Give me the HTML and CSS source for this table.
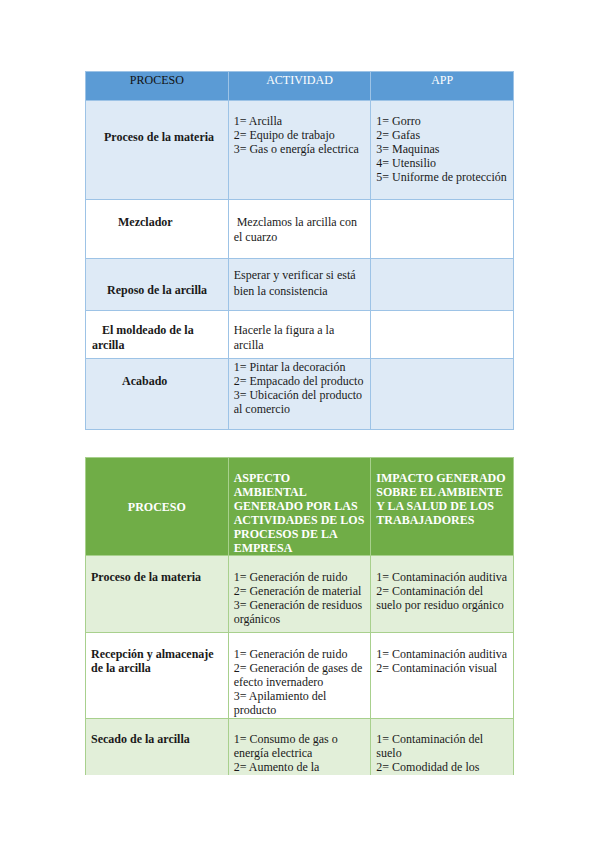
FILE: index.html
```html
<!DOCTYPE html>
<html lang="es">
<head>
<meta charset="utf-8">
<title>Procesos</title>
<link rel="stylesheet" href="styles.css">
</head>
<body>
<main class="page">
  <section class="tbl blue">
    <div class="c h h1">PROCESO</div>
    <div class="c h hw">ACTIVIDAD</div>
    <div class="c h hw">APP</div>

    <div class="c alt b r1a">Proceso de la materia</div>
    <div class="c alt r1b">1= Arcilla<br>2= Equipo de trabajo<br>3= Gas o energía electrica</div>
    <div class="c alt r1b">1= Gorro<br>2= Gafas<br>3= Maquinas<br>4= Utensilio<br>5= Uniforme de protección</div>

    <div class="c b r2a">Mezclador</div>
    <div class="c r2b">&nbsp;Mezclamos la arcilla con el cuarzo</div>
    <div class="c"></div>

    <div class="c alt b r3a">Reposo de la arcilla</div>
    <div class="c alt r3b">Esperar y verificar si está bien la consistencia</div>
    <div class="c alt"></div>

    <div class="c b r4a">El moldeado de la arcilla</div>
    <div class="c r4b">Hacerle la figura a la arcilla</div>
    <div class="c"></div>

    <div class="c alt b r5a">Acabado</div>
    <div class="c alt r5b">1= Pintar la decoración<br>2= Empacado del producto<br>3= Ubicación del producto al comercio</div>
    <div class="c alt"></div>
  </section>

  <section class="tbl green">
    <div class="c gh gh1">PROCESO</div>
    <div class="c gh">ASPECTO<br>AMBIENTAL GENERADO POR LAS ACTIVIDADES DE LOS PROCESOS DE LA EMPRESA</div>
    <div class="c gh">IMPACTO GENERADO SOBRE EL AMBIENTE Y LA SALUD DE LOS TRABAJADORES</div>

    <div class="c galt b g1">Proceso de la materia</div>
    <div class="c galt g1">1= Generación de ruido<br>2= Generación de material<br>3= Generación de residuos orgánicos</div>
    <div class="c galt g1">1= Contaminación auditiva<br>2= Contaminación del suelo por residuo orgánico</div>

    <div class="c b g2">Recepción y almacenaje de la arcilla</div>
    <div class="c g2">1= Generación de ruido<br>2= Generación de gases de efecto invernadero<br>3= Apilamiento del producto</div>
    <div class="c g2">1= Contaminación auditiva<br>2= Contaminación visual</div>

    <div class="c galt b g3">Secado de la arcilla</div>
    <div class="c galt g3">1= Consumo de gas o energía electrica<br>2= Aumento de la</div>
    <div class="c galt g3">1= Contaminación del suelo<br>2= Comodidad de los</div>
  </section>
</main>
</body>
</html>
```
FILE: styles.css
```css
html, body {
  margin: 0;
  padding: 0;
  background: #ffffff;
}
.page {
  padding: 71px 0 0 85px;
  display: flex;
  flex-direction: column;
  gap: 27px;
  font-family: "Liberation Serif", "Times New Roman", serif;
  font-size: 12px;
  line-height: 14px;
  color: #1a1a1a;
}
.tbl {
  display: grid;
  grid-template-columns: 1fr 1fr 1fr;
  width: 429px;
  box-sizing: border-box;
  padding: 1px;
  gap: 1px;
}
.blue {
  background: #9dc3e6;
  grid-template-rows: 28px 98px 58px 51px 47px 70px;
}
.green {
  background: #a8d08d;
  grid-template-rows: 97px 76px 85px 56px;
  height: 318px;
  overflow: hidden;
}
.c {
  background: #ffffff;
  padding: 0 5px;
  overflow: hidden;
}
.b { font-weight: bold; }
.alt { background: #deeaf6; }
.galt { background: #e2efd9; }
.h {
  background: #5b9bd5;
  text-align: center;
  padding-top: 1px;
  color: #111;
}
.hw { color: #ffffff; }
.r1a { padding-top: 29px; padding-left: 18px; }
.r1b { padding-top: 13px; }
.r2a { padding-top: 15px; padding-left: 32px; line-height: 15px; }
.r2b { padding-top: 15px; line-height: 15px; }
.r3a { padding-top: 24px; padding-left: 21px; line-height: 15px; }
.r3b { padding-top: 8px; line-height: 16px; }
.r4a { padding-top: 12px; padding-left: 6px; text-indent: 10px; line-height: 15px; }
.r4b { padding-top: 12px; line-height: 15px; }
.r5a { padding-top: 15px; padding-left: 36px; }
.r5b { padding-top: 1px; }
.gh {
  background: #70ad47;
  color: #ffffff;
  font-weight: bold;
  padding-top: 13px;
  padding-right: 2px;
}
.gh1 {
  display: flex;
  align-items: center;
  justify-content: center;
  padding: 0;
}
.g1 { padding-top: 14px; }
.g2 { padding-top: 14px; }
.g3 { padding-top: 13px; }
.green .b { padding-left: 5px; }
```
